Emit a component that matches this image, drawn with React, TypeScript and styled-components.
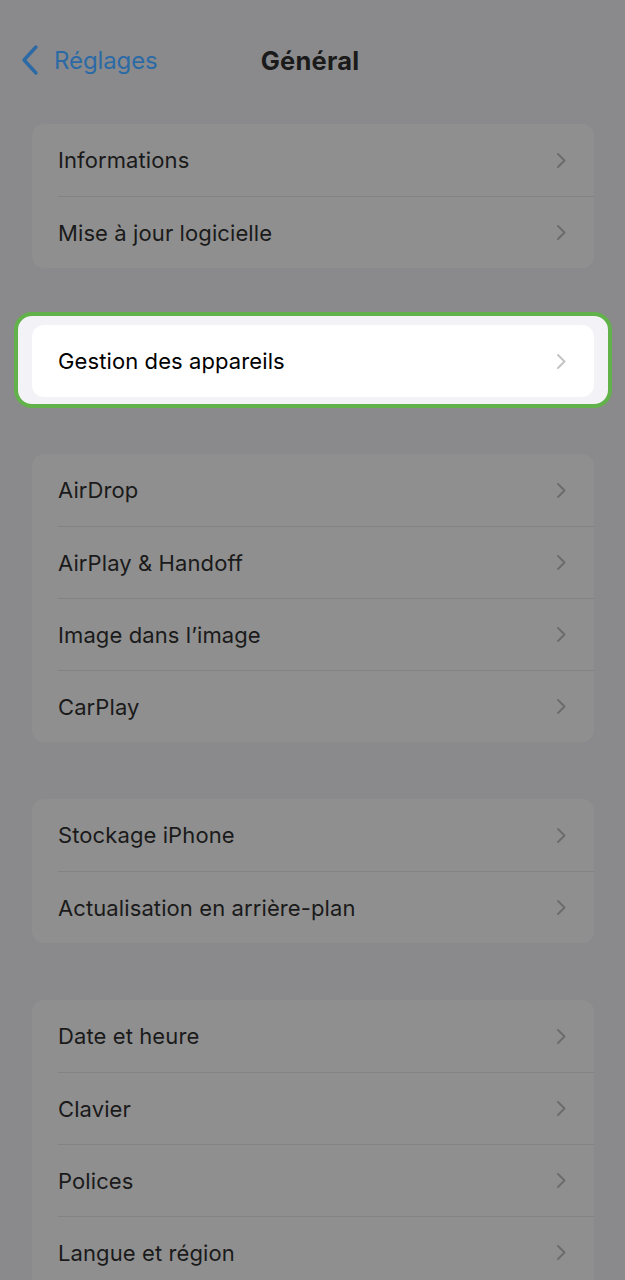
import React from "react";
import styled, { createGlobalStyle } from "styled-components";

const GlobalStyle = createGlobalStyle`
  html, body {
    margin: 0;
    padding: 0;
    background: #8a8a8c;
  }
  body {
    font-family: Inter, "Noto Sans", "Liberation Sans", sans-serif;
    -webkit-font-smoothing: antialiased;
  }
`;

const Page = styled.div(() => ({
  minHeight: 1280,
  boxSizing: "border-box",
  padding: "0 31px 0 32px",
  background: "#8a8a8c",
  overflow: "hidden",
}));

const NavBar = styled.header(() => ({
  display: "grid",
  gridTemplateColumns: "1fr auto 1fr",
  alignItems: "center",
  height: 40,
  padding: "40px 0 44px",
}));

const BackButton = styled.div(() => ({
  display: "flex",
  alignItems: "center",
  gap: 14,
  marginLeft: -12,
  color: "#2c6aa6",
  fontSize: 24,
  letterSpacing: -0.1,
}));

const Title = styled.h1(() => ({
  margin: "0 6px 0 0",
  fontSize: 25.5,
  fontWeight: 700,
  color: "#1a1a1a",
  letterSpacing: 0.2,
}));

const Groups = styled.div(() => ({
  display: "flex",
  flexDirection: "column",
  gap: 57,
}));

const Card = styled.section<{ $lit?: boolean }>(({ $lit }) => ({
  borderRadius: 12,
  background: $lit ? "#ffffff" : "#8f8f8f",
  overflow: "hidden",
}));

const Spotlight = styled.div(() => ({
  margin: "-13px -18px -11px",
  padding: "9px 14px 7px",
  border: "4px solid #62b14b",
  borderRadius: 18,
  background: "#f2f2f7",
}));

const Row = styled.div<{ $lit?: boolean }>(({ $lit }) => ({
  display: "flex",
  alignItems: "center",
  justifyContent: "space-between",
  height: 72,
  boxSizing: "border-box",
  marginLeft: 26,
  paddingRight: 28,
  fontSize: 22,
  color: $lit ? "#000000" : "#1a1a1a",
  letterSpacing: 0.1,
  "& + &": {
    borderTop: "1px solid #838383",
  },
}));

function Chevron({ lit }: { lit?: boolean }) {
  return (
    <svg width="10" height="17" viewBox="0 0 10 17" fill="none">
      <path
        d="M2 2l6.5 6.5L2 15"
        stroke={lit ? "#c4c4c7" : "#6c6c6c"}
        strokeWidth="2"
        strokeLinecap="round"
        strokeLinejoin="round"
      />
    </svg>
  );
}

function BackChevron() {
  return (
    <svg width="20" height="32" viewBox="0 0 20 32" fill="none">
      <path
        d="M16 3L4 16l12 13"
        stroke="#2c6aa6"
        strokeWidth="3.4"
        strokeLinecap="round"
        strokeLinejoin="round"
      />
    </svg>
  );
}

const groups = [
  ["Informations", "Mise à jour logicielle"],
  ["Gestion des appareils"],
  ["AirDrop", "AirPlay & Handoff", "Image dans l’image", "CarPlay"],
  ["Stockage iPhone", "Actualisation en arrière-plan"],
  ["Date et heure", "Clavier", "Polices", "Langue et région"],
];

function Group({ items, lit }: { items: string[]; lit?: boolean }) {
  return (
    <Card $lit={lit}>
      {items.map((label) => (
        <Row key={label} $lit={lit}>
          {label}
          <Chevron lit={lit} />
        </Row>
      ))}
    </Card>
  );
}

export default function App() {
  return (
    <>
      <GlobalStyle />
      <Page>
        <NavBar>
          <BackButton>
            <BackChevron />
            Réglages
          </BackButton>
          <Title>Général</Title>
          <span />
        </NavBar>
        <Groups>
          {groups.map((items, i) =>
            i === 1 ? (
              <Spotlight key={i}>
                <Group items={items} lit />
              </Spotlight>
            ) : (
              <Group key={i} items={items} />
            )
          )}
        </Groups>
      </Page>
    </>
  );
}
